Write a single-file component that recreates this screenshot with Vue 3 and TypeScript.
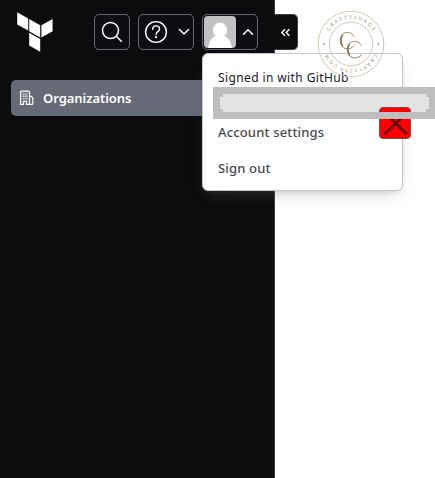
<script setup lang="ts">
const items: string[] = ['Account settings', 'Sign out']
</script>

<template>
  <div class="page">
    <aside class="sidebar">
      <header class="toolbar">
        <svg class="logo" width="37" height="41" viewBox="0 0 37 41" fill="#fff">
          <path d="M0.2 .2 11.2 6.4V18.6L.2 12.4ZM12.2 7 23.2 13.2V25.4L12.2 19.2ZM24.4 13.2 35.600 7V19.2L24.4 25.4ZM12.2 20.700 23.2 26.900V39.8L12.2 33.5Z" />
        </svg>
        <div class="controls">
          <button class="control search" aria-label="Search">
            <svg width="22" height="22" viewBox="0 0 22 22" fill="none" stroke="#fff" stroke-width="1.5" stroke-linecap="round"><circle cx="9.5" cy="9.5" r="8" /><path d="m15.3 15.3 5 5" /></svg>
          </button>
          <button class="control help" aria-label="Help">
            <svg width="24" height="24" viewBox="0 0 24 24" fill="none" stroke="#fff" stroke-width="1.4" stroke-linecap="round"><circle cx="12" cy="12" r="10.4" /><path d="M8.7 9.3c.1-2.1 1.5-3.4 3.4-3.4s3.4 1.2 3.4 3c0 2.8-3.4 2.7-3.4 5.5" /><circle cx="12.1" cy="17.2" r=".45" fill="#fff" /></svg>
            <svg class="chevron" width="12" height="8" viewBox="0 0 12 8" fill="none" stroke="#fff" stroke-width="1.5" stroke-linecap="round"><path d="m1.5 1.5 4.5 4.5 4.5-4.5" /></svg>
          </button>
          <button class="control account" aria-label="Account">
            <svg class="avatar" width="32" height="32" viewBox="0 0 32 32"><rect width="32" height="32" fill="#c1c1c1" /><path d="M4 32C5 25 8 21 12 20A7.2 7.2 0 1 1 20 20C24 21 27 25 28 32Z" fill="#fff" /></svg>
            <svg class="chevron" width="12" height="8" viewBox="0 0 12 8" fill="none" stroke="#fff" stroke-width="1.5" stroke-linecap="round"><path d="m1.5 6.3 4.5-4.5 4.5 4.5" /></svg>
          </button>
        </div>
      </header>
      <nav class="nav">
        <a class="nav-item">
          <svg width="16" height="16" viewBox="0 0 16 16" fill="none" stroke="#fff" stroke-width="1.2"><path d="M1.600 15V2.2Q1.600 1.2 2.600 1.2H9.5Q10.5 1.2 10.5 2.2V14.400H12.800Q13.800 14.400 13.800 13.400V8.300L12.400 6.300H10.5M.8 14.400H4.5V11.4H7.5V14.400H10.5" /><path d="M4.200 3.2V10M6.100 3.2V10M8 3.2V10" stroke-dasharray="1.3 1.1" /></svg>
          <span>Organizations</span>
        </a>
      </nav>
    </aside>
    <button class="collapse" aria-label="Collapse">
      <svg width="11" height="9" viewBox="0 0 11 9" fill="none" stroke="#fff" stroke-width="1.4"><path d="M5 1.200 1.800 4.5 5 7.800M9.400 1.200 6.200 4.5 9.400 7.800" /></svg>
    </button>
    <section class="menu">
      <p class="signed">Signed in with GitHub</p>
      <a v-for="item in items" :key="item" class="menu-item">{{ item }}</a>
    </section>
    <svg class="seal" width="68" height="68" viewBox="0 0 68 68">
      <defs>
        <path id="ring-top" d="M8.8 34A25.2 25.2 0 0 1 59.2 34" />
        <path id="ring-bottom" d="M59.2 34A25.2 25.2 0 0 1 8.8 34" />
      </defs>
      <g fill="none" stroke="#d5c9b8"><circle cx="34" cy="34" r="32.8" /><circle cx="34" cy="34" r="21.7" /></g>
      <g class="ring-text"><text><textPath href="#ring-top" startOffset="50%" text-anchor="middle" textLength="52">CRAFTYSHADE</textPath></text><text><textPath href="#ring-bottom" startOffset="50%" text-anchor="middle" textLength="58">CRAFTY198.COM</textPath></text></g>
      <g fill="#a9987e"><circle cx="6.8" cy="34" r=".9" /><circle cx="61.4" cy="34" r=".9" /></g>
      <g fill="none" stroke="#8c754f" stroke-width=".9" stroke-linecap="round">
        <path d="M36.700 26.200C34.500 20.500 23.300 20.400 23.300 30.500C23.300 40.500 33.500 40.600 37 35.700" /><path d="M25.200 25.500Q22.500 30.500 25.500 35.800" stroke-width="1.5" />
        <path d="M44.200 35.200C42 29.500 30.300 29.400 30.300 39.500C30.300 49.500 41 49.600 44.500 44.700" /><path d="M32.200 34.500Q29.500 39.500 32.500 44.800" stroke-width="1.5" />
      </g>
    </svg>
    <div class="mask-fill"></div>
    <div class="close"><svg width="32" height="32" viewBox="0 0 32 32"><path d="M5.500 27.500 28 5M5.500 5 28 27.500" stroke="#680000" stroke-width="2.8" /></svg></div>
    <div class="mask"></div>
  </div>
</template>

<style>
body { background: #fff; overflow: hidden; }
</style>
<style scoped>
.page { position: relative; width: 435px; height: 478px; overflow: hidden; font-family: "Noto Sans", "Open Sans", sans-serif; }
.sidebar { box-sizing: border-box; width: 275px; height: 478px; background: #0c0c0e; border-right: 1px solid #3b3d45; }
.toolbar { box-sizing: border-box; height: 80px; padding: 14px 16px 0 17px; display: flex; justify-content: space-between; }
.logo { margin-top: -2px; }
.controls { display: flex; gap: 8px; }
.control { box-sizing: border-box; height: 36px; padding: 0; display: flex; align-items: center; justify-content: center; background: #0d0e12; border: 1px solid #656a76; border-radius: 5px; }
.search { width: 36px; }
.help { width: 56px; gap: 10px; padding-left: 1px; }
.account { width: 56px; gap: 6px; justify-content: flex-start; padding-left: 1px; }
.avatar { border-radius: 4px; }
.nav { padding: 0 11px; }
.nav-item { box-sizing: border-box; height: 36px; padding-left: 8px; display: flex; align-items: center; gap: 8px; background: #656a76; border-radius: 5px; color: #fff; font-size: 13px; font-weight: 600; letter-spacing: -.05px; }
.collapse { position: absolute; left: 274px; top: 14px; width: 24px; height: 36px; padding: 0; display: flex; align-items: center; justify-content: center; border: 1px solid #3b3d45; border-left: 0; border-radius: 0 5px 5px 0; background: #0c0c0e; }
.menu { position: absolute; left: 202px; top: 53px; box-sizing: border-box; width: 201px; height: 138px; padding: 11px 15px; border: 1px solid #c2c5cb; border-radius: 6px; background: #fff; box-shadow: 0 2px 3px #656a761a, 0 8px 16px -6px #656a7655; }
.signed { margin: 0; height: 49px; line-height: 25px; font-size: 12px; letter-spacing: .39px; color: #17181c; white-space: nowrap; }
.menu-item { display: block; height: 36px; line-height: 36px; font-size: 13px; font-weight: 500; letter-spacing: .16px; color: #474950; }
.seal { position: absolute; left: 317px; top: 10px; }
.ring-text { fill: #a9987e; font: 5px Lato, sans-serif; }
.close { position: absolute; left: 379px; top: 107px; box-sizing: border-box; width: 32px; height: 32px; border: 1px solid #7d4547; border-radius: 4px; background: #f00; }
.close svg { display: block; margin: -1px; }
.mask, .mask-fill { position: absolute; left: 213px; top: 87px; box-sizing: border-box; width: 222px; height: 32px; }
.mask { border: 7px solid #bfbdbe; border-right-width: 6px; }
.mask-fill { background: linear-gradient(#e3e3e3, #e3e3e3) 10px 7px / 203px 18px no-repeat, linear-gradient(#e3e3e3, #e3e3e3) 7px 10px / 209px 12px no-repeat, #bfbdbe; }
</style>
